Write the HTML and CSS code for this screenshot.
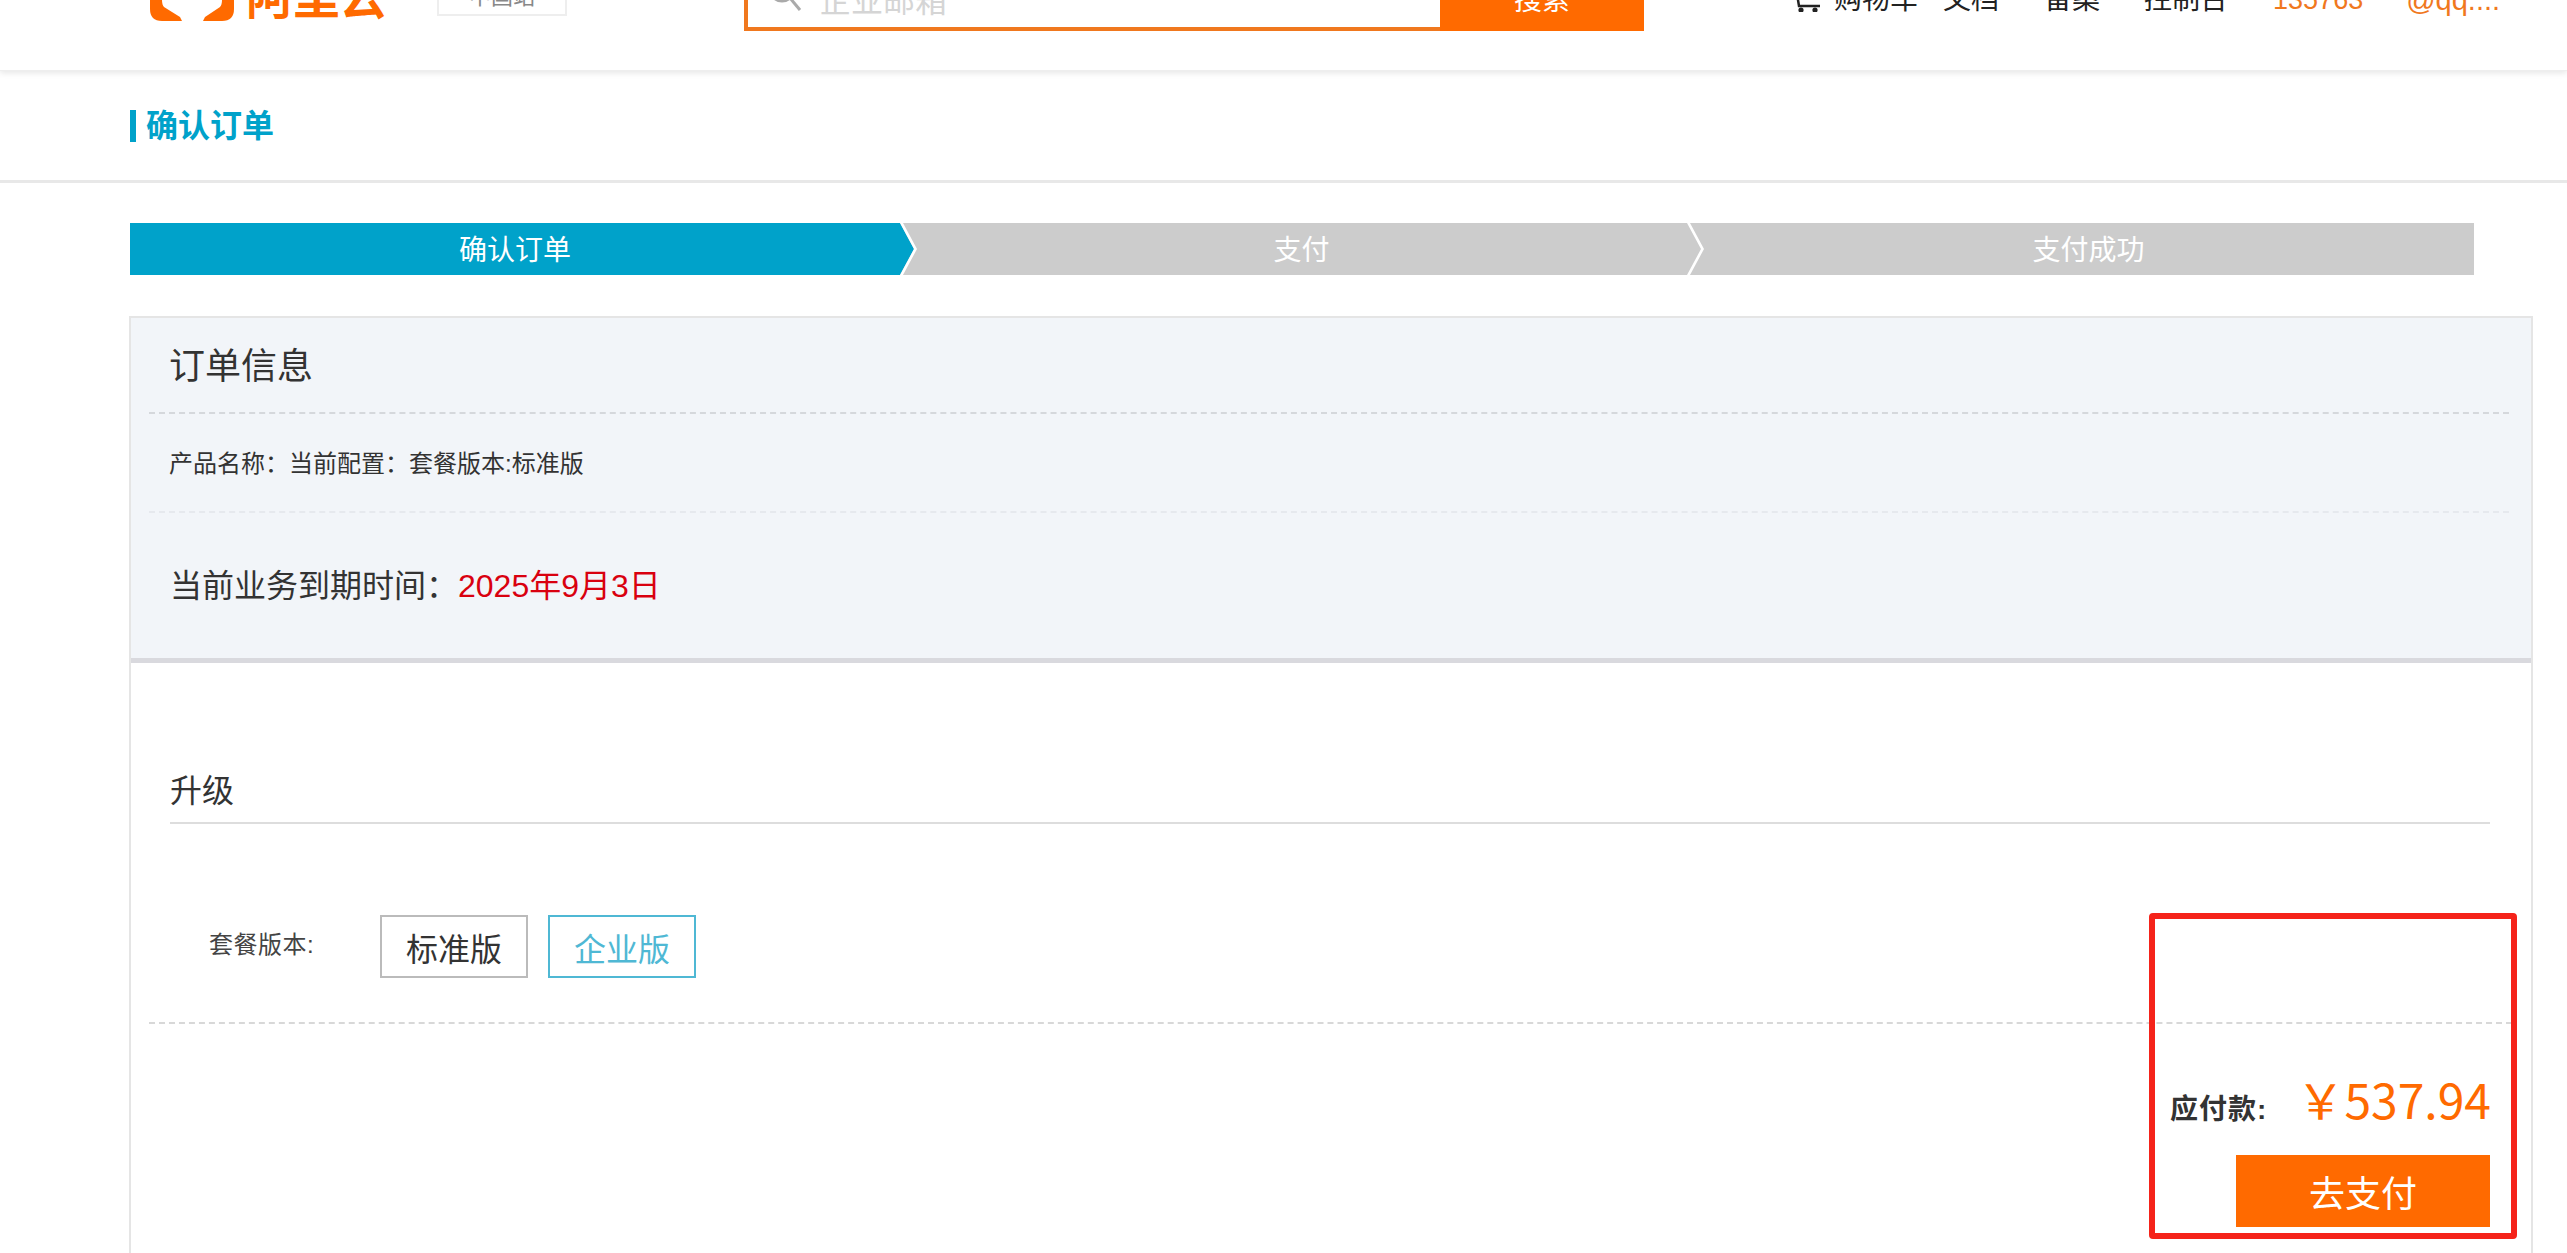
FILE: index.html
```html
<!DOCTYPE html>
<html lang="zh-CN">
<head>
  <meta charset="UTF-8">
  <meta name="viewport" content="width=device-width, initial-scale=1.0">
  <title>确认订单</title>
  <link rel="stylesheet" href="styles.css">
</head>
<body>
  <header class="topbar">
    <div class="brand">
      <svg class="brand-mark" viewBox="0 0 86 21" aria-hidden="true">
        <path d="M0 0 V9 Q0 21 12 21 H32 L30 17 L14 7 Q12 5 12 0 Z" fill="#ff6a00"/>
        <path d="M84 0 V9 Q84 21 72 21 H53 L55 17 L70 7 Q72 5 72 0 Z" fill="#ff6a00"/>
      </svg>
      <span class="brand-name">阿里云</span>
    </div>
    <div class="site-switch">中国站</div>
    <div class="search">
      <div class="search-box">
        <svg class="search-icon" viewBox="0 0 34 34" aria-hidden="true">
          <circle cx="14" cy="9" r="12" fill="none" stroke="#aaa" stroke-width="3"/>
          <path d="M22 18 L32 30" stroke="#aaa" stroke-width="3"/>
        </svg>
        <span class="search-hint">企业邮箱</span>
      </div>
      <div class="search-btn">搜索</div>
    </div>
    <nav class="nav">
      <svg class="cart-icon" viewBox="0 0 26 26" aria-hidden="true">
        <path d="M2 8 L4 20 H25" fill="none" stroke="#222" stroke-width="2.5"/>
        <circle cx="6" cy="24" r="2.6" fill="#222"/>
        <circle cx="20" cy="24" r="2.6" fill="#222"/>
      </svg>
      <a class="nav-cart">购物车</a>
      <a class="nav-doc">文档</a>
      <a class="nav-icp">备案</a>
      <a class="nav-console">控制台</a>
      <a class="nav-user">135763</a>
      <a class="nav-mail">@qq....</a>
    </nav>
  </header>

  <div class="page-title">
    <h1>确认订单</h1>
  </div>

  <ol class="steps">
    <li class="step active">确认订单</li>
    <li class="step">支付</li>
    <li class="step">支付成功</li>
  </ol>

  <main class="order">
    <section class="order-info">
      <h2>订单信息</h2>
      <p class="product">产品名称：当前配置：套餐版本:标准版</p>
      <p class="expire">当前业务到期时间：<span class="expire-date">2025年9月3日</span></p>
    </section>

    <section class="upgrade">
      <h3>升级</h3>
      <div class="plan-row">
        <span class="plan-label">套餐版本:</span>
        <button class="plan">标准版</button>
        <button class="plan selected">企业版</button>
      </div>
      <div class="checkout">
        <div class="price-line">
          <span class="price-label">应付款:</span>
          <span class="price">￥537.94</span>
        </div>
        <button class="pay">去支付</button>
      </div>
    </section>

    <div class="callout"></div>
  </main>
</body>
</html>
```

FILE: styles.css
```css
html {
  height: 100%;
  overflow: hidden;
}
body {
  margin: 0;
  background: #fff;
  color: #333;
  font-family: "Liberation Sans", "Noto Sans CJK SC", sans-serif;
}
h1, h2, h3, p, ol {
  margin: 0;
  padding: 0;
}

/* header is scrolled partly off the top of the window */
.topbar {
  height: 71px;
  display: flex;
  align-items: flex-end;
  overflow: hidden;
  border-bottom: 1px solid #eee;
  box-sizing: border-box;
  box-shadow: 0 2px 6px rgba(0, 0, 0, 0.1);
  position: relative;
}
.brand {
  display: flex;
  align-items: flex-end;
  margin: 0 0 49px 150px;
  width: 287px;
  flex: none;
}
.brand-mark {
  width: 86px;
  height: 21px;
  flex: none;
}
.brand-name {
  margin-left: 10px;
  font-size: 47px;
  line-height: 47px;
  font-weight: 700;
  color: #ff6a00;
}
.site-switch {
  width: 130px;
  height: 50px;
  line-height: 58px;
  margin-bottom: 54px;
  border: 2px solid #eee;
  box-sizing: border-box;
  text-align: center;
  font-size: 22px;
  color: #888;
  flex: none;
}
.search {
  display: flex;
  margin: 0 0 39px 177px;
  width: 900px;
  height: 60px;
  flex: none;
}
.search-box {
  flex: 1;
  border: 4px solid #f0781e;
  border-right: 0;
  display: flex;
  align-items: flex-end;
  padding-left: 20px;
}
.search-icon {
  width: 34px;
  height: 34px;
  margin-bottom: 13px;
}
.search-hint {
  margin-left: 17px;
  font-size: 32px;
  line-height: 40px;
  color: #d5d5d5;
  margin-bottom: 6px;
}
.search-btn {
  width: 204px;
  flex: none;
  background: #ff6a00;
  color: #fff;
  font-size: 28px;
  line-height: 40px;
  text-align: center;
  padding-top: 10px;
  box-sizing: border-box;
}
.nav {
  display: flex;
  align-items: flex-end;
  margin: 0 0 50px 151px;
  font-size: 28px;
  line-height: 40px;
  color: #222;
}
.cart-icon {
  width: 26px;
  height: 26px;
  margin: 0 13px 8px 0;
}
.nav-doc { margin-left: 25px; }
.nav-icp { margin-left: 45px; }
.nav-console { margin-left: 44px; }
.nav-user, .nav-mail { color: #f0781e; }
.nav-user {
  margin-left: 45px;
  font-size: 27px;
}
.nav-mail {
  margin-left: 43px;
  font-size: 29px;
}

.page-title {
  height: 112px;
  padding-left: 130px;
  display: flex;
  align-items: center;
  border-bottom: 3px solid #e8e8e8;
  background: #fff;
  box-sizing: border-box;
  margin-bottom: 40px;
}
.page-title h1 {
  border-left: 6px solid #00a2ca;
  padding-left: 10px;
  font-size: 32px;
  line-height: 32px;
  font-weight: 700;
  color: #00a2ca;
}

.steps {
  list-style: none;
  display: flex;
  margin-left: 130px;
  width: 2344px;
  height: 52px;
  background: #ccc;
}
.step {
  position: relative;
  flex: none;
  width: 787px;
  padding-left: 16px;
  box-sizing: border-box;
  text-align: center;
  line-height: 56px;
  font-size: 28px;
  color: #fff;
}
.step.active {
  width: 770px;
  padding-left: 0;
  background: #00a2ca;
}
/* point of the active step */
.step.active::after {
  content: "";
  position: absolute;
  top: 0;
  left: 100%;
  width: 14px;
  height: 52px;
  background: #00a2ca;
  clip-path: polygon(0 0, 100% 50%, 0 100%);
}
/* white chevron at the start of the next steps */
.step:not(.active)::before {
  content: "";
  position: absolute;
  z-index: 1;
  top: 0;
  left: 0;
  width: 17px;
  height: 52px;
  background: #fff;
  clip-path: polygon(0 0, 3px 0, 100% 50%, 3px 100%, 0 100%, 14px 50%);
}

.order {
  position: relative;
  width: 2404px;
  margin: 41px 0 0 129px;
  border: 2px solid #e5e5e5;
  border-bottom: 0;
  box-sizing: border-box;
  height: 1000px;
}
.order-info {
  background: #f2f5f9;
  border-bottom: 5px solid #d9d9de;
  height: 345px;
  box-sizing: border-box;
  padding: 0 22px 0 18px;
}
.order-info h2 {
  height: 96px;
  padding-left: 20px;
  line-height: 97px;
  font-size: 36px;
  font-weight: 400;
  border-bottom: 2px dashed #d5d8dc;
  box-sizing: border-box;
  color: #333;
}
.product {
  height: 99px;
  padding-left: 20px;
  line-height: 100px;
  font-size: 24px;
  border-bottom: 2px dashed #e6e9ee;
  box-sizing: border-box;
}
.expire {
  padding-left: 21px;
  line-height: 146px;
  font-size: 32px;
}
.expire-date {
  color: #d9000f;
}

.upgrade {
  position: relative;
  padding: 0 19px 0 18px;
}
.upgrade h3 {
  margin: 109px 0 0 21px;
  width: 2320px;
  height: 52px;
  line-height: 38px;
  font-size: 32px;
  font-weight: 400;
  border-bottom: 2px solid #ddd;
  box-sizing: border-box;
}
.plan-row {
  display: flex;
  align-items: center;
  padding: 91px 0 44px 60px;
  border-bottom: 2px dashed #d8d8d8;
}
.plan-label {
  width: 171px;
  font-size: 24px;
  letter-spacing: 0.5px;
  color: #444;
  margin-bottom: 8px;
}
.plan {
  width: 148px;
  height: 63px;
  margin: 0 20px 0 0;
  padding: 0;
  background: #fff;
  border: 2px solid #bbb;
  font: inherit;
  font-size: 32px;
  color: #333;
}
.plan.selected {
  border-color: #4fb8d4;
  color: #4fb8d4;
}
.checkout {
  position: absolute;
  top: 296px;
  right: 40px;
  display: flex;
  flex-direction: column;
  align-items: flex-end;
  width: 321px;
}
.price-line {
  display: flex;
  align-items: baseline;
  justify-content: space-between;
  width: 100%;
}
.price-label {
  font-size: 28px;
  font-weight: 700;
  letter-spacing: 1px;
}
.price {
  font-family: "Noto Sans CJK SC", sans-serif;
  font-size: 48px;
  line-height: 60px;
  color: #ff6a00;
}
.pay {
  width: 254px;
  height: 72px;
  margin: 27px 1px 0 0;
  border: 0;
  background: #ff6a00;
  color: #fff;
  font: inherit;
  font-size: 36px;
}

/* red annotation drawn over the page */
.callout {
  position: absolute;
  left: 2018px;
  top: 595px;
  width: 368px;
  height: 326px;
  border: 6px solid #f5231a;
  border-radius: 4px;
  box-sizing: border-box;
}
```
